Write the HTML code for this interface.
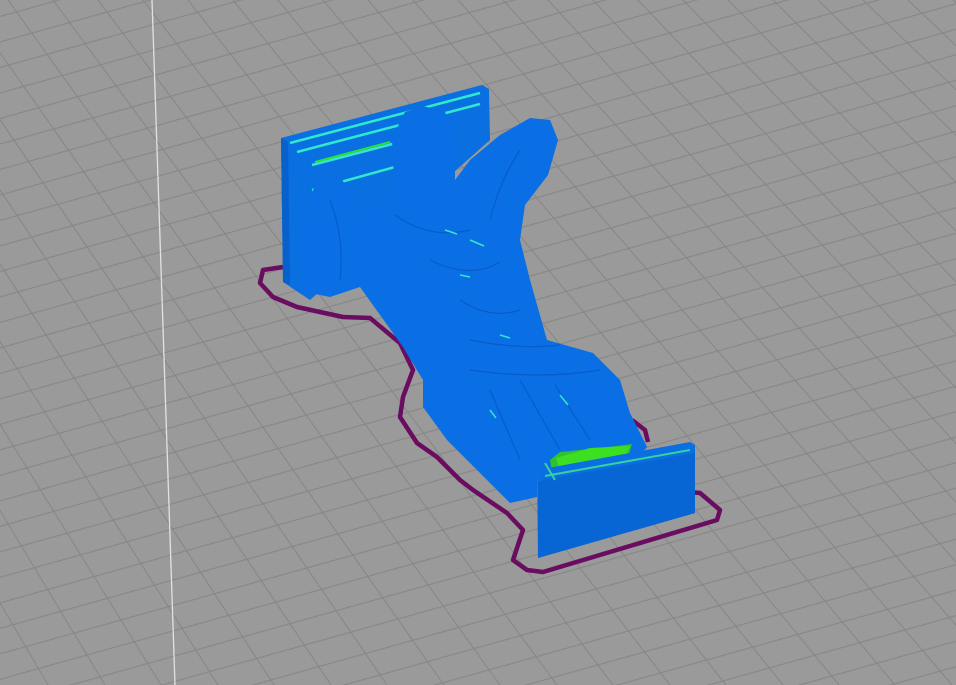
<!DOCTYPE html>
<html><head><meta charset="utf-8"><style>html,body{margin:0;padding:0;background:#9a9a9a;width:956px;height:685px;overflow:hidden}svg{display:block;overflow:hidden}</style></head>
<body>
<svg width="956" height="685" viewBox="0 0 956 685" xmlns="http://www.w3.org/2000/svg">
<defs>
<pattern id="pb" patternUnits="userSpaceOnUse" width="200" height="24.55" patternTransform="rotate(-15.64)">
<line x1="0" y1="15.89" x2="200" y2="15.89" stroke="#868686" stroke-width="1"/>
</pattern>
</defs>
<rect width="956" height="685" fill="#9a9a9a"/>
<rect width="956" height="685" fill="url(#pb)"/>
<g stroke="#868686" stroke-width="1">
<line x1="-352" y1="0" x2="48" y2="685"/>
<line x1="-307" y1="0" x2="105" y2="685"/>
<line x1="-262" y1="0" x2="161" y2="685"/>
<line x1="-217" y1="0" x2="218" y2="685"/>
<line x1="-172" y1="0" x2="274" y2="685"/>
<line x1="-127" y1="0" x2="331" y2="685"/>
<line x1="-82" y1="0" x2="387" y2="685"/>
<line x1="-37" y1="0" x2="444" y2="685"/>
<line x1="8" y1="0" x2="500" y2="685"/>
<line x1="53" y1="0" x2="557" y2="685"/>
<line x1="98" y1="0" x2="613" y2="685"/>
<line x1="143" y1="0" x2="670" y2="685"/>
<line x1="188" y1="0" x2="726" y2="685"/>
<line x1="233" y1="0" x2="783" y2="685"/>
<line x1="278" y1="0" x2="839" y2="685"/>
<line x1="323" y1="0" x2="895" y2="685"/>
<line x1="368" y1="0" x2="952" y2="685"/>
<line x1="413" y1="0" x2="1008" y2="685"/>
<line x1="458" y1="0" x2="1065" y2="685"/>
<line x1="503" y1="0" x2="1121" y2="685"/>
<line x1="548" y1="0" x2="1178" y2="685"/>
<line x1="593" y1="0" x2="1234" y2="685"/>
<line x1="638" y1="0" x2="1291" y2="685"/>
<line x1="683" y1="0" x2="1347" y2="685"/>
<line x1="728" y1="0" x2="1404" y2="685"/>
<line x1="773" y1="0" x2="1460" y2="685"/>
<line x1="818" y1="0" x2="1517" y2="685"/>
<line x1="863" y1="0" x2="1573" y2="685"/>
<line x1="908" y1="0" x2="1630" y2="685"/>
<line x1="953" y1="0" x2="1686" y2="685"/>
</g>
<line x1="152" y1="0" x2="175" y2="685" stroke="#e2e2e2" stroke-width="1.3"/>
<polyline fill="none" stroke="#6a0c60" stroke-width="4.5" stroke-linejoin="round" points="283,267 263,270 260,283 273,297 297,307 343,317 370,318 400,343 413,370 403,397 400,417 417,443 437,457 460,480 473,490 507,513 523,530 513,560 527,570 543,572 717,520 720,510 700,493 690,492"/>
<polyline fill="none" stroke="#6a0c60" stroke-width="4.5" points="632,420 645,430 648,442"/>
<polygon fill="#0a6fe0" points="281,138 482,85 489,89 490,140 310,300 283,282"/>
<polygon fill="#0860cc" points="281,138 288,142 290,285 283,282"/>
<g stroke="#30e8d0" stroke-width="2.5" fill="none">
<line x1="290" y1="143" x2="480" y2="93"/>
<line x1="297" y1="152" x2="480" y2="104"/>
<line x1="312" y1="165" x2="400" y2="142"/>
<line x1="312" y1="190" x2="395" y2="167"/>
</g>
<line x1="315" y1="162" x2="390" y2="142" stroke="#30e030" stroke-width="2"/>
<polygon fill="#0a6ee4" points="317,178 340,176 360,210 395,195 392,140 405,112 423,106 445,112 455,140 455,180 470,160 500,135 530,118 550,120 558,140 548,175 525,205 520,240 530,280 547,340 593,353 620,380 630,413 637,427 647,447 640,455 595,460 537,470 537,497 510,503 487,480 447,440 423,407 423,380 403,347 360,287 330,297 305,292 300,240 310,200"/>
<ellipse cx="423" cy="150" rx="30" ry="43" fill="#0a6ee4"/>
<g stroke="#0858c0" stroke-width="1.2" fill="none" opacity=".8">
<path d="M395 215 Q430 240 470 230"/><path d="M430 260 Q470 280 500 262"/><path d="M460 300 Q490 320 520 310"/>
<path d="M470 340 Q520 350 560 345"/><path d="M470 370 Q540 380 600 370"/><path d="M490 390 L520 460"/><path d="M520 380 L560 450"/><path d="M555 385 L590 440"/>
<path d="M330 200 Q345 240 340 280"/><path d="M520 150 Q500 180 490 220"/>
</g>
<g stroke="#30e8d0" stroke-width="1.5" fill="none">
<path d="M445 230 l12 4"/><path d="M470 240 l14 6"/><path d="M460 275 l10 2"/><path d="M500 335 l10 3"/><path d="M490 410 l6 8"/><path d="M560 395 l8 10"/>
</g>
<polygon fill="#30c030" points="550,460 560,452 600,448 632,444 628,458 552,472"/>
<polygon fill="#3ce020" points="556,458 590,448 630,446 626,456 560,470"/>
<polygon fill="#0a6fe0" points="537,470 690,442 695,445 695,513 538,558"/>
<polygon fill="#0865d4" points="543,480 695,453 695,513 538,558 538,482"/>
<line x1="545" y1="476" x2="690" y2="450" stroke="#38d0a0" stroke-width="2"/>
<line x1="545" y1="463" x2="555" y2="480" stroke="#38d0a0" stroke-width="2"/>
</svg>
</body></html>
